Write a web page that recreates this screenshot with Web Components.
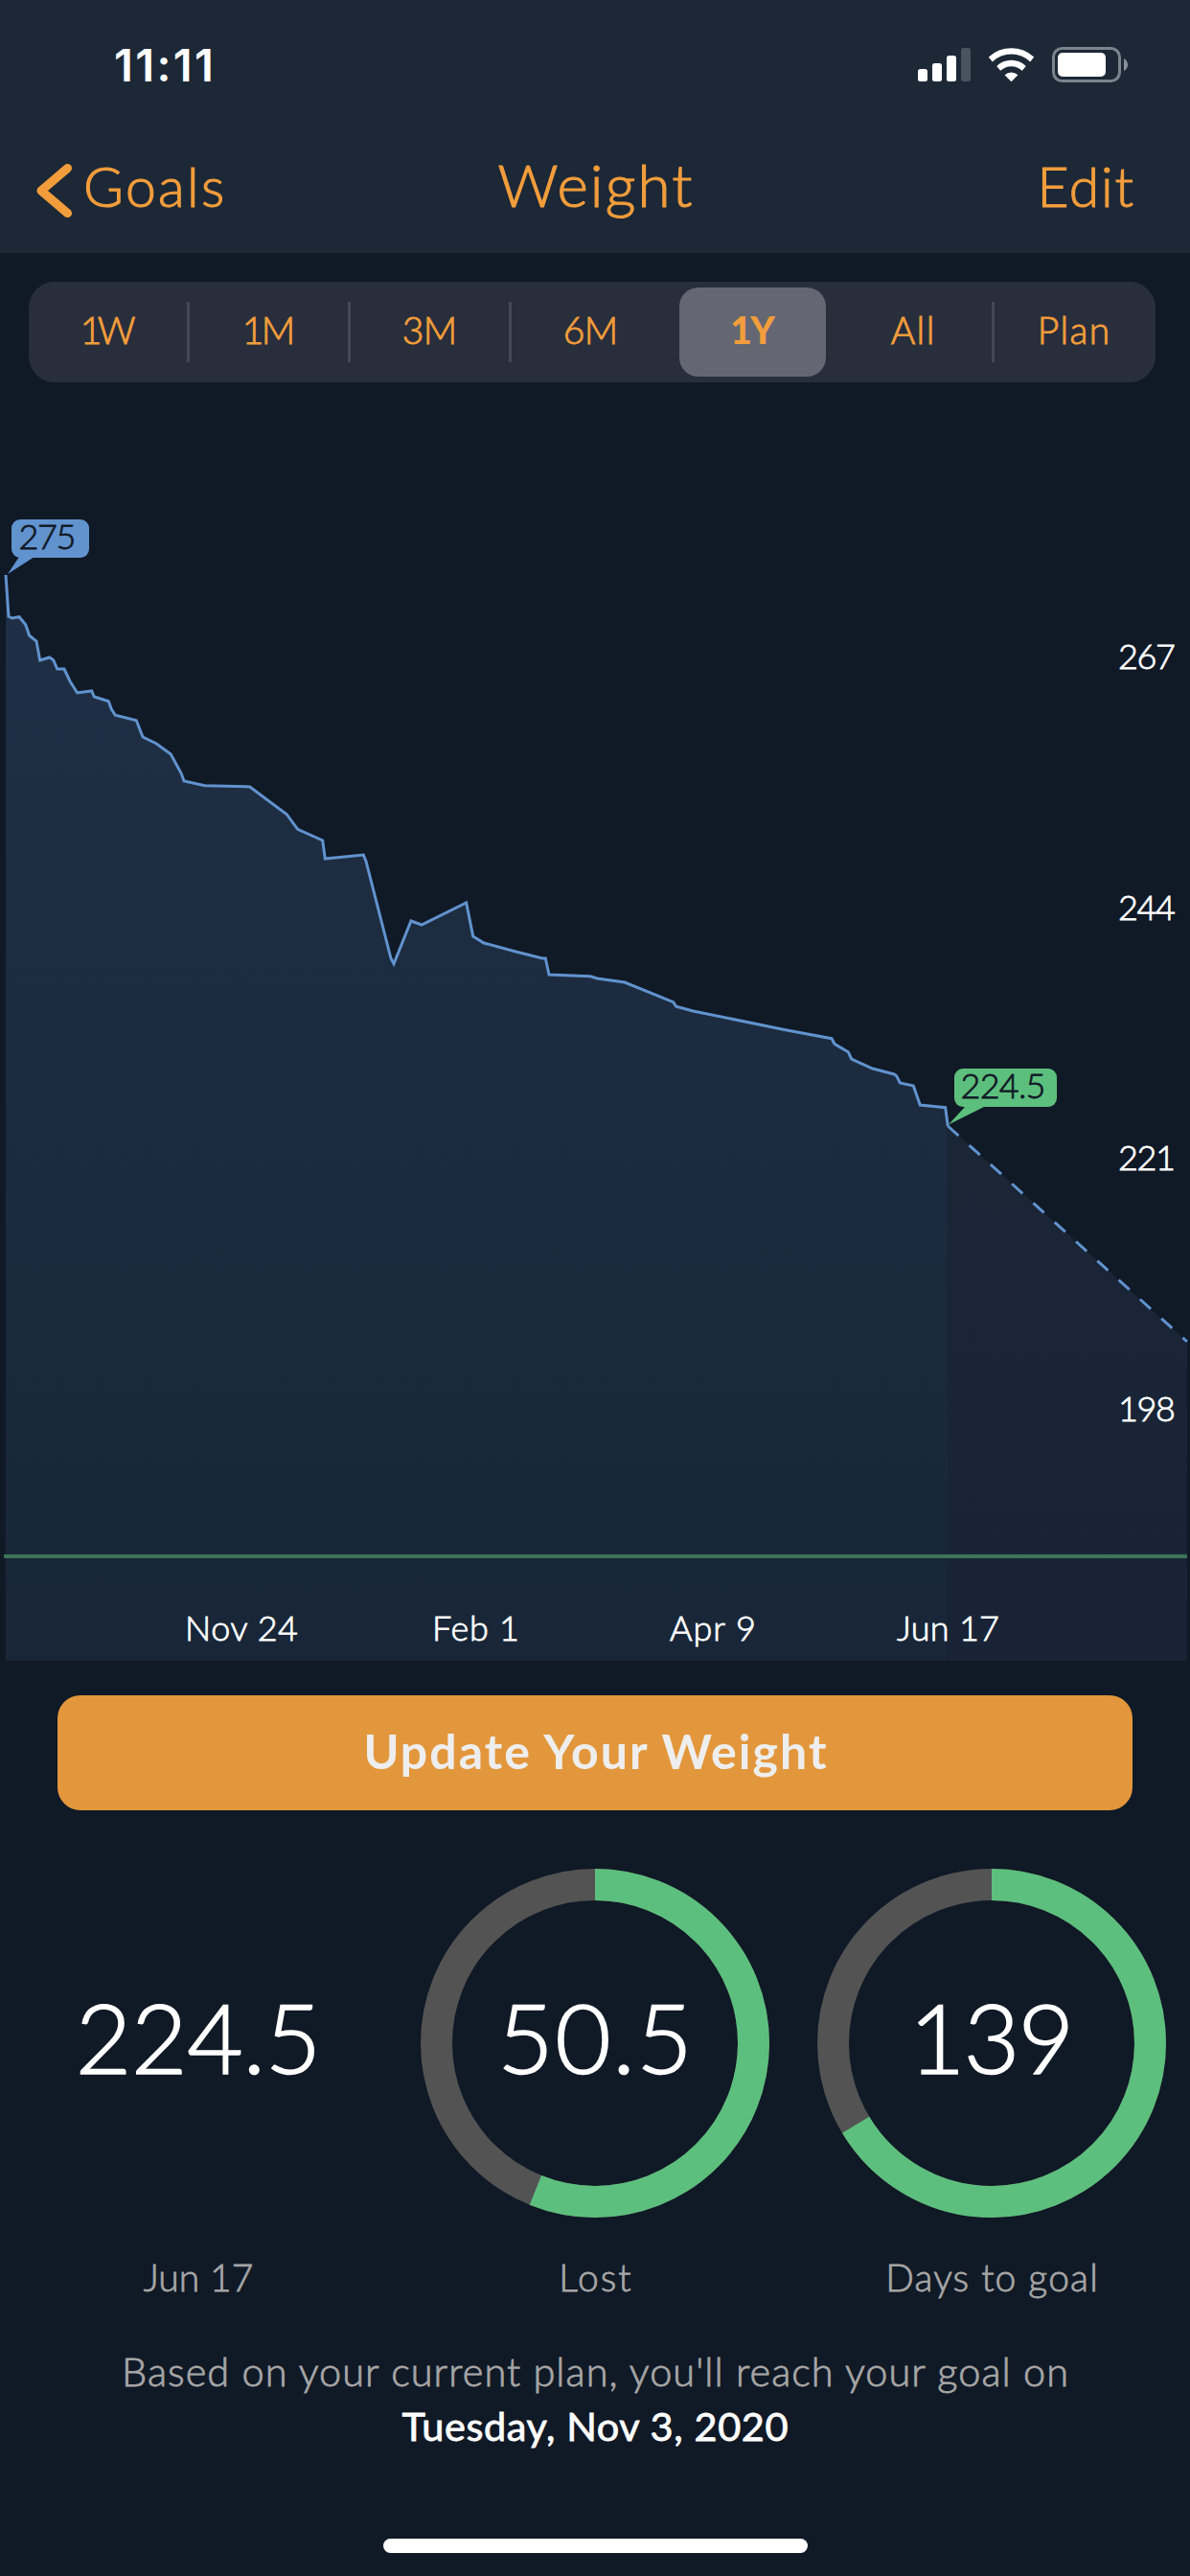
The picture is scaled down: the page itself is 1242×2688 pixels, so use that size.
<!DOCTYPE html>
<html lang="en">
<head>
<meta charset="utf-8">
<title>Weight</title>
<style>
    body {
        margin: 0;
        background: #101926;
        color: #fff;
        font-family: Lato, "Liberation Sans", sans-serif;
        font-weight: 300;
    }
</style>
</head>
<body>
<weight-app></weight-app>

<script>
// One line of text, letter-spaced so that its ink is `width` pixels wide.
class FitText extends HTMLElement {
    constructor() {
        super();
        this.attachShadow({ mode: 'open' });
        this.shadowRoot.innerHTML = `
            <style>
                :host { display: inline-block; white-space: nowrap; }
            </style>
            <slot></slot>
        `;
    }

    connectedCallback() {
        const text = this.textContent;
        const style = getComputedStyle(this);
        const ctx = document.createElement('canvas').getContext('2d');
        ctx.font = `${style.fontWeight} ${style.fontSize} ${style.fontFamily}`;
        const box = ctx.measureText(text);
        const ink = box.actualBoundingBoxLeft + box.actualBoundingBoxRight;
        const spacing = (Number(this.getAttribute('width')) - ink) / (text.length - 1);
        this.style.letterSpacing = `${spacing.toFixed(3)}px`;
        this.style.marginRight = `${(-spacing).toFixed(3)}px`;
    }
}

class StatusBar extends HTMLElement {
    constructor() {
        super();
        this.attachShadow({ mode: 'open' });
        this.shadowRoot.innerHTML = `
            <style>
                :host {
                    display: flex;
                    justify-content: space-between;
                    align-items: center;
                    height: 136px;
                    padding: 0 65px 0 119px;
                    font: 600 47px Inter, "Liberation Sans", sans-serif;
                }
                fit-text { padding-bottom: 2px; }
                svg { display: block; }
            </style>
            <fit-text width="99">11:11</fit-text>
            <svg width="219" height="38" viewBox="958 49 219 38" fill="#fff">
                <rect x="958" y="72" width="10" height="13" rx="2.5"/>
                <rect x="973" y="66" width="10" height="19" rx="2.5"/>
                <rect x="988" y="58" width="10" height="27" rx="2.5"/>
                <rect x="1003" y="50" width="10" height="35" rx="2.5" fill="#48535f"/>
                <path d="M1031.8 59.6A34.5 34.5 0 0 1 1079.2 59.6L1075.2 64.4A28.5 28.5 0 0 0 1035.8 64.4Z"/>
                <path d="M1040.2 69A21.8 21.8 0 0 1 1070.8 69L1066.8 73.8A16 16 0 0 0 1044.2 73.8Z"/>
                <path d="M1048.6 78.2A10.4 10.4 0 0 1 1062.4 78.2L1056.3 84.6Q1055.5 85.4 1054.7 84.6Z"/>
                <rect x="1099.5" y="50.5" width="69" height="34" rx="9" fill="none" stroke="#7b838c" stroke-width="3"/>
                <rect x="1104" y="55" width="50" height="25" rx="5"/>
                <path d="M1173 61Q1177 63.500 1177 67.500T1173 74Z" fill="#8b9199"/>
            </svg>
        `;
    }
}

class NavBar extends HTMLElement {
    constructor() {
        super();
        this.attachShadow({ mode: 'open' });
        this.shadowRoot.innerHTML = `
            <style>
                :host {
                    display: grid;
                    grid-template-columns: 1fr auto 1fr;
                    align-items: baseline;
                    height: 112px;
                    padding: 16px 38px 0;
                    color: #f29d3c;
                    font-size: 57px;
                    line-height: 80px;
                    -webkit-text-stroke: 1.1px;
                }
                .back { display: flex; align-items: baseline; gap: 12px; }
                .back svg { align-self: center; margin-top: 9px; }
                .title { font-size: 62px; }
                .edit { justify-self: end; padding-right: 21px; }
            </style>
            <div class="back">
                <svg width="37" height="56" viewBox="0 0 37 56" fill="none" stroke="currentColor"
                     stroke-width="9" stroke-linecap="round" stroke-linejoin="round">
                    <path d="M32.500 4.500L5 28L32.500 51.500"/>
                </svg>
                <fit-text width="142">Goals</fit-text>
            </div>
            <fit-text class="title" width="202">Weight</fit-text>
            <fit-text class="edit" width="95">Edit</fit-text>
        `;
    }
}

class RangePicker extends HTMLElement {
    constructor() {
        super();
        this.attachShadow({ mode: 'open' });
        const ranges = [['1W', 54], ['1M', 49], ['3M', 52], ['6M', 52], ['1Y', 46], ['All', 43], ['Plan', 69]];
        const active = 4;
        this.shadowRoot.innerHTML = `
            <style>
                :host {
                    display: grid;
                    grid-template-columns: repeat(7, 168px);
                    height: 105px;
                    margin: 30px 36px 0 30px;
                    border-radius: 27px;
                    background: #282e3b;
                    color: #f29d3c;
                    font-size: 39px;
                    line-height: 100px;
                    -webkit-text-stroke: 0.9px;
                }
                .cell {
                    display: flex;
                    justify-content: center;
                    align-items: center;
                    box-sizing: border-box;
                    height: 105px;
                    padding-right: 3px;
                }
                .cell > fit-text { padding-bottom: 5px; }
                .divided {
                    background: linear-gradient(#444856, #444856) right center / 3px 63px no-repeat;
                }
                .pill {
                    display: flex;
                    justify-content: center;
                    width: 153px;
                    height: 93px;
                    margin-left: 2px;
                    border-radius: 20px;
                    background: #646772;
                    line-height: 89px;
                    font-weight: 900;
                    -webkit-text-stroke: 0;
                }
            </style>
            ${ranges.map(([name, width], i) => {
                const text = `<fit-text width="${width}">${name}</fit-text>`;
                if (i === active) return `<div class="cell"><div class="pill">${text}</div></div>`;
                const divided = i !== active - 1 && i !== ranges.length - 1;
                return `<div class="cell ${divided ? 'divided' : ''}">${text}</div>`;
            }).join('')}
        `;
    }
}

const HISTORY = [
    [6, 600], [9, 643.3], [12.7, 645], [20, 643.7], [26.7, 651.7], [30.7, 663.3], [38, 669], [41.7, 689],
    [51.7, 686], [55.7, 688.7], [59.7, 698], [67, 698], [73, 710.7], [80.7, 723], [95.7, 721], [98.3, 727],
    [113.3, 731.7], [116.3, 740], [120.3, 746.3], [142.3, 751.7], [149, 769], [163.3, 776], [178.3, 787],
    [189.3, 807.3], [192, 815], [213.7, 819.7], [260.7, 821], [299.3, 849.7], [310.7, 865.3], [336.7, 877],
    [339.3, 896], [379.3, 892], [382, 898.7], [408, 1000], [411, 1005.7], [429, 961], [440, 965],
    [486.7, 942], [493.7, 977], [505, 984], [537.3, 992.7], [566, 1000], [569.3, 1000], [573, 1017],
    [616, 1018.7], [623.3, 1021], [652, 1025], [702.7, 1045.7], [705.7, 1050.3], [723.3, 1055],
    [820, 1074.7], [868, 1083.7], [871, 1089.3], [885.3, 1097.7], [888.7, 1105], [910.7, 1115],
    [933.3, 1121], [935.7, 1122.7], [939.3, 1130], [953.3, 1133], [960.3, 1153], [986.7, 1155.7], [989.3, 1175]
];

class WeightChart extends HTMLElement {
    constructor() {
        super();
        this.attachShadow({ mode: 'open' });
        const line = HISTORY.map(p => p.join(',')).join(' ');
        const days = [[193, 118, 'Nov 24'], [451, 91, 'Feb 1'], [699, 90, 'Apr 9'], [936, 107, 'Jun 17']];
        const weights = [[698, 267], [960, 244], [1221, 221], [1483, 198]];
        this.shadowRoot.innerHTML = `
            <style>
                :host { display: block; height: 1334px; }
                svg { display: block; }
                text { font-size: 36px; fill: #fff; stroke: #fff; stroke-width: 0.8px; }
                .tag { fill: #101926; stroke: #101926; }
            </style>
            <svg width="1242" height="1334" viewBox="0 399 1242 1334">
                <defs>
                    <linearGradient id="past" gradientUnits="userSpaceOnUse" x1="0" y1="600" x2="0" y2="1733">
                        <stop offset="0" stop-color="#1f2f45"/>
                        <stop offset="1" stop-color="#182638"/>
                    </linearGradient>
                    <linearGradient id="future" gradientUnits="userSpaceOnUse" x1="0" y1="1175" x2="0" y2="1733">
                        <stop offset="0" stop-color="#1a2636"/>
                        <stop offset="1" stop-color="#182436"/>
                    </linearGradient>
                </defs>
                <polygon points="${line} 989.3,1733 6,1733" fill="url(#past)"/>
                <polygon points="989.3,1175 1239,1400 1239,1733 989.3,1733" fill="url(#future)"/>
                <rect x="4" y="1622" width="1235" height="4" fill="#3c7558"/>
                <polyline points="${line}" fill="none" stroke="#6193ce" stroke-width="3"/>
                <path d="M989.3 1175L1239 1400" stroke="#6193ce" stroke-width="3" stroke-dasharray="15 15"/>
                <path d="M20 581L8 599L36 581Z" fill="#6193ce"/>
                <rect x="12" y="542" width="81" height="40" rx="9" fill="#6193ce"/>
                <text class="tag" x="19.500" y="573" textLength="60">275</text>
                <path d="M1008 1154L990 1173.500L1029 1154Z" fill="#5dbf7d"/>
                <rect x="996" y="1115" width="107" height="40" rx="9" fill="#5dbf7d"/>
                <text class="tag" x="1002.500" y="1146" textLength="89">224.5</text>
                ${weights.map(([y, n]) => `<text x="1167" y="${y}" textLength="60">${n}</text>`).join('')}
                ${days.map(([x, w, name]) => `<text x="${x}" y="1712" textLength="${w}">${name}</text>`).join('')}
            </svg>
        `;
    }
}

class AppButton extends HTMLElement {
    constructor() {
        super();
        this.attachShadow({ mode: 'open' });
        this.shadowRoot.innerHTML = `
            <style>
                :host {
                    display: block;
                    margin: 36px 60px 0;
                    color: #eee;
                    font-size: 50px;
                    font-weight: 700;
                }
                button {
                    display: block;
                    width: 100%;
                    height: 120px;
                    padding: 0 0 4px;
                    border: 0;
                    border-radius: 24px;
                    background: #e3973c;
                    color: inherit;
                    font: inherit;
                }
            </style>
            <button><slot></slot></button>
        `;
    }
}

// A number over its caption; with a `progress` share it sits in a ring.
class StatDial extends HTMLElement {
    constructor() {
        super();
        this.attachShadow({ mode: 'open' });
        const progress = Number(this.getAttribute('progress'));
        const r = 165.5;
        const round = 2 * Math.PI * r;
        const ring = progress ? `
            <svg viewBox="-182 -182 364 364" fill="none" stroke-width="33">
                <circle r="${r}" stroke="#535353"/>
                <circle r="${r}" stroke="#5dbf7d" transform="rotate(-90)"
                        stroke-dasharray="${progress * round} ${round}"/>
            </svg>` : '';
        this.shadowRoot.innerHTML = `
            <style>
                :host { display: flex; flex-direction: column; align-items: center; }
                .dial { display: grid; place-items: center; width: 364px; height: 364px; }
                .dial > * { grid-area: 1 / 1; }
                svg { width: 364px; height: 364px; }
                .value {
                    padding-top: 19px;
                    line-height: 120px;
                    -webkit-text-stroke: 1.6px;
                }
                .caption {
                    margin-top: 37px;
                    color: #a6a6a6;
                    line-height: 50px;
                    -webkit-text-stroke: 0.8px;
                }
            </style>
            <div class="dial">${ring}<div class="value"><slot name="value"></slot></div></div>
            <div class="caption"><slot></slot></div>
        `;
    }
}

class WeightApp extends HTMLElement {
    constructor() {
        super();
        this.attachShadow({ mode: 'open' });
        this.shadowRoot.innerHTML = `
            <style>
                :host {
                    display: flex;
                    flex-direction: column;
                    width: 1242px;
                    height: 2688px;
                    overflow: hidden;
                }
                header { background: #1d2836; }
                .stats { display: grid; grid-template-columns: repeat(3, 414px); margin-top: 61px; }
                .value { font-size: 101px; }
                .caption { font-size: 39px; }
                .forecast {
                    display: flex;
                    flex-direction: column;
                    align-items: center;
                    margin-top: 36px;
                    color: #a6a6a6;
                    font-size: 41.5px;
                    line-height: 57px;
                    -webkit-text-stroke: 0.8px;
                }
                .date { color: #fff; font-weight: 400; }
                .home { width: 443px; height: 15px; margin: auto auto 24px; border-radius: 8px; background: #fff; }
            </style>
            <header>
                <status-bar></status-bar>
                <nav-bar></nav-bar>
            </header>
            <range-picker></range-picker>
            <weight-chart></weight-chart>
            <app-button><fit-text width="484">Update Your Weight</fit-text></app-button>
            <section class="stats">
                <stat-dial>
                    <fit-text class="value" slot="value" width="244">224.5</fit-text>
                    <fit-text class="caption" width="113">Jun 17</fit-text>
                </stat-dial>
                <stat-dial progress="0.561">
                    <fit-text class="value" slot="value" width="189">50.5</fit-text>
                    <fit-text class="caption" width="71">Lost</fit-text>
                </stat-dial>
                <stat-dial progress="0.6636">
                    <fit-text class="value" slot="value" width="155">139</fit-text>
                    <fit-text class="caption" width="215">Days to goal</fit-text>
                </stat-dial>
            </section>
            <div class="forecast">
                <fit-text width="986">Based on your current plan, you'll reach your goal on</fit-text>
                <fit-text class="date" width="403">Tuesday, Nov 3, 2020</fit-text>
            </div>
            <div class="home"></div>
        `;
    }
}

customElements.define('status-bar', StatusBar);
customElements.define('nav-bar', NavBar);
customElements.define('range-picker', RangePicker);
customElements.define('weight-chart', WeightChart);
customElements.define('app-button', AppButton);
customElements.define('weight-app', WeightApp);
customElements.define('stat-dial', StatDial);
// Last, so that every line already has its place and its font to measure with.
customElements.define('fit-text', FitText);
</script>
</body>
</html>
